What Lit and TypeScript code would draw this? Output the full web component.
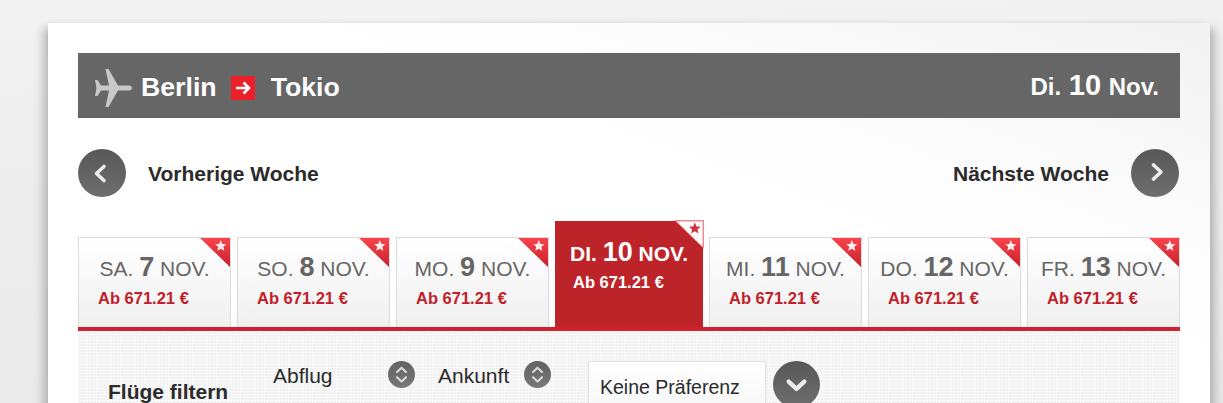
import { LitElement, html, css, svg } from "lit";
import { customElement } from "lit/decorators.js";

const FONT = css`"Liberation Sans", Arial, sans-serif`;

const STAR = "M0 -5.6 L1.5 -1.8 L5.4 -1.7 L2.4 0.8 L3.4 4.6 L0 2.5 L-3.4 4.6 L-2.4 0.8 L-5.4 -1.7 L-1.5 -1.8 Z";
const UPDOWN = "M16 19.5L24 12L32 19.5M16 29L24 36.5L32 29";

const days = [
  { d: "SA.", n: "7" },
  { d: "SO.", n: "8" },
  { d: "MO.", n: "9" },
  { d: "DI.", n: "10", active: true },
  { d: "MI.", n: "11" },
  { d: "DO.", n: "12" },
  { d: "FR.", n: "13" },
];

function circleIcon(path: string, size: number, sw: number, small = false) {
  const id = small ? "cgs" : "cg";
  return html`<svg class="circle" width=${size} height=${size} viewBox="0 0 48 48">
    <defs><linearGradient id=${id} x1="0" y1="0" x2="0" y2="1">
      <stop offset="0" stop-color=${small ? "#626262" : "#585858"}></stop>
      <stop offset="1" stop-color=${small ? "#787878" : "#6e6e6e"}></stop>
    </linearGradient></defs>
    <circle cx="24" cy="24" r="24" fill="url(#${id})"></circle>
    <path d=${path} fill="none" stroke=${small ? "#dcdcdc" : "#ececec"} stroke-width=${sw} stroke-linecap="round" stroke-linejoin="round"></path>
  </svg>`;
}

@customElement("app-root")
export class AppRoot extends LitElement {
  static styles = css`
    :host {
      display: block;
      height: 403px;
      overflow: hidden;
      background:
        linear-gradient(178deg, #f3f3f3 0%, #eeeeee 30%, #e9e9e9 100%);
      font-family: ${FONT};
    }
    .card {
      box-sizing: border-box;
      width: 1162px;
      height: 400px;
      margin: 23px 0 0 48px;
      padding: 30px 30px 0;
      background: linear-gradient(200deg, #f2f2f2 0%, #f8f8f8 16%, #fdfdfd 30%, #ffffff 42%);
      box-shadow: -5px 5px 9px rgba(0, 0, 0, 0.22), 5px 5px 9px rgba(0, 0, 0, 0.22);
    }
    .bar {
      box-sizing: border-box;
      height: 65px;
      background: #666666;
      color: #fff;
      display: flex;
      align-items: center;
      font-weight: 700;
      font-size: 26.7px;
      padding: 4px 21px 0 14px;
    }
    .plane { flex: none; margin: 0 8px 0 0; }
    .sq { flex: none; margin: 0 16px 0 14px; }
    .date { margin-left: auto; margin-bottom: 4px; font-size: 24px; word-spacing: 1px; }
    .date b { font-size: 29px; }
    .nav {
      display: flex;
      align-items: center;
      justify-content: space-between;
      margin: 31px 1px 0 0;
      height: 48px;
      font-size: 21px;
      font-weight: 700;
      color: #2b2b2b;
    }
    .nav > div { display: flex; align-items: center; gap: 22px; }
    .nav span { padding-top: 2px; }
    .circle { display: block; flex: none; }
    .tabs {
      display: flex;
      align-items: flex-end;
      gap: 6px;
      margin-top: 24px;
      height: 106px;
    }
    .tab {
      position: relative;
      box-sizing: border-box;
      width: 153px;
      height: 90px;
      border: 1px solid #dcdcdc;
      border-bottom: 0;
      background: linear-gradient(#ffffff, #f0f0f0);
      color: #666;
      font-size: 21px;
      text-align: center;
    }
    .tab.active {
      width: 148px;
      height: 106px;
      border: 0;
      background: #bd242a;
      color: #fff;
      font-weight: 700;
    }
    .label {
      display: block;
      line-height: 32px;
      margin-top: 13px;
      white-space: nowrap;
    }
    .active .label { margin-top: 15px; }
    .label b { font-size: 27px; }
    .price {
      display: block;
      text-align: left;
      padding-left: 19px;
      font-size: 16.5px;
      font-weight: 700;
      line-height: 20px;
      margin-top: 3px;
      color: #c0202a;
      white-space: nowrap;
    }
    .active .price { color: #fff; padding-left: 18px; margin-top: 2px; }
    .corner { position: absolute; top: 0; right: 0; display: block; }
    .active .corner { top: -1px; right: -1px; }
    .filter {
      height: 72px;
      border-top: 4px solid #d0222c;
      background-color: #f1f1f1;
      background-image:
        linear-gradient(90deg, #f9f9f9 1.5px, transparent 1.5px),
        linear-gradient(#f9f9f9 1.5px, transparent 1.5px);
      background-size: 3px 3px;
      display: grid;
      grid-template-columns: 30px 165px 115px 50px 85.5px 64.5px 178px 54px 1fr;
      grid-template-rows: 72px;
      color: #2b2b2b;
      font-size: 21px;
      overflow: hidden;
    }
    .ft { grid-column: 2; font-weight: 700; padding-top: 49px; line-height: 23px; white-space: nowrap; }
    .lbl { padding-top: 33px; line-height: 24px; white-space: nowrap; }
    .btn { padding-top: 30px; }
    .select {
      grid-column: 7;
      box-sizing: border-box;
      height: 80px;
      margin-top: 30px;
      width: 178px;
      border: 1px solid #e0e0e0;
      background: linear-gradient(#ffffff, #f2f2f2);
      padding: 13px 0 0 11px;
      font-size: 19.5px;
      line-height: 24px;
      white-space: nowrap;
    }
    .selbtn { grid-column: 8; padding: 30px 0 0 7px; }
  `;

  private corner(active: boolean) {
    return html`<svg class="corner" width="30" height="30" viewBox="0 0 30 30">
      <defs><linearGradient id="rg" x1="0" y1="0" x2="0" y2="1">
        <stop offset="0" stop-color="#f9444c"></stop><stop offset="1" stop-color="#c8202c"></stop>
      </linearGradient></defs>
      ${active
        ? svg`<path d="M0 0H30V29Z" fill="#f08a90"></path>
             <path d="M3 1.5H28.5V26.5Z" fill="#fff"></path>
             <path d=${STAR} transform="translate(20.8 8.5) scale(1.1)" fill="#d6303a"></path>`
        : svg`<path d="M0 0H30V29Z" fill="url(#rg)"></path>
             <path d=${STAR} transform="translate(20.8 8) scale(1.05)" fill="#fff" opacity="0.92"></path>`}
    </svg>`;
  }

  render() {
    return html`<div class="card">
      <div class="bar">
        <svg class="plane" width="41" height="40" viewBox="0 0 41 40">
          <path fill="#c8c8c8" d="M13.5 1 L16.5 1 L26 17.5 L36.5 17.5 C39 17.5 40 18.7 40 20 C40 21.3 39 22.5 36.5 22.5 L26 22.5 L16.5 39 L13.5 39 L17 22.5 L9 22.5 L5.5 28 L3 28 L4.5 20 L3 12 L5.5 12 L9 17.5 L17 17.5 Z"></path>
        </svg>
        <span>Berlin</span>
        <svg class="sq" width="24" height="24" viewBox="0 0 24 24">
          <rect width="24" height="24" fill="#ec2029"></rect>
          <path d="M5 12H18M12.5 6.5L18 12L12.5 17.5" fill="none" stroke="#fff" stroke-width="2.6"></path>
        </svg>
        <span>Tokio</span>
        <span class="date">Di. <b>10</b> Nov.</span>
      </div>
      <div class="nav">
        <div>${circleIcon("M26 17.5L18.5 24.5L26 31.5", 48, 3.6)}<span>Vorherige Woche</span></div>
        <div><span>Nächste Woche</span>${circleIcon("M22.5 16L30 23L22.5 30", 48, 3.6)}</div>
      </div>
      <div class="tabs">
        ${days.map(
          (t) => html`<div class="tab ${t.active ? "active" : ""}">
            <span class="label">${t.d} <b>${t.n}</b> NOV.</span>
            <span class="price">Ab 671.21 €</span>
            ${this.corner(!!t.active)}
          </div>`
        )}
      </div>
      <div class="filter">
        <div class="ft">Flüge filtern</div>
        <div class="lbl">Abflug</div>
        <div class="btn">${circleIcon(UPDOWN, 27, 3.6, true)}</div>
        <div class="lbl">Ankunft</div>
        <div class="btn">${circleIcon(UPDOWN, 27, 3.6, true)}</div>
        <div class="select">Keine Präferenz</div>
        <div class="selbtn">${circleIcon("M16 21L24 28.5L32 21", 47, 4.4)}</div>
      </div>
    </div>`;
  }
}
